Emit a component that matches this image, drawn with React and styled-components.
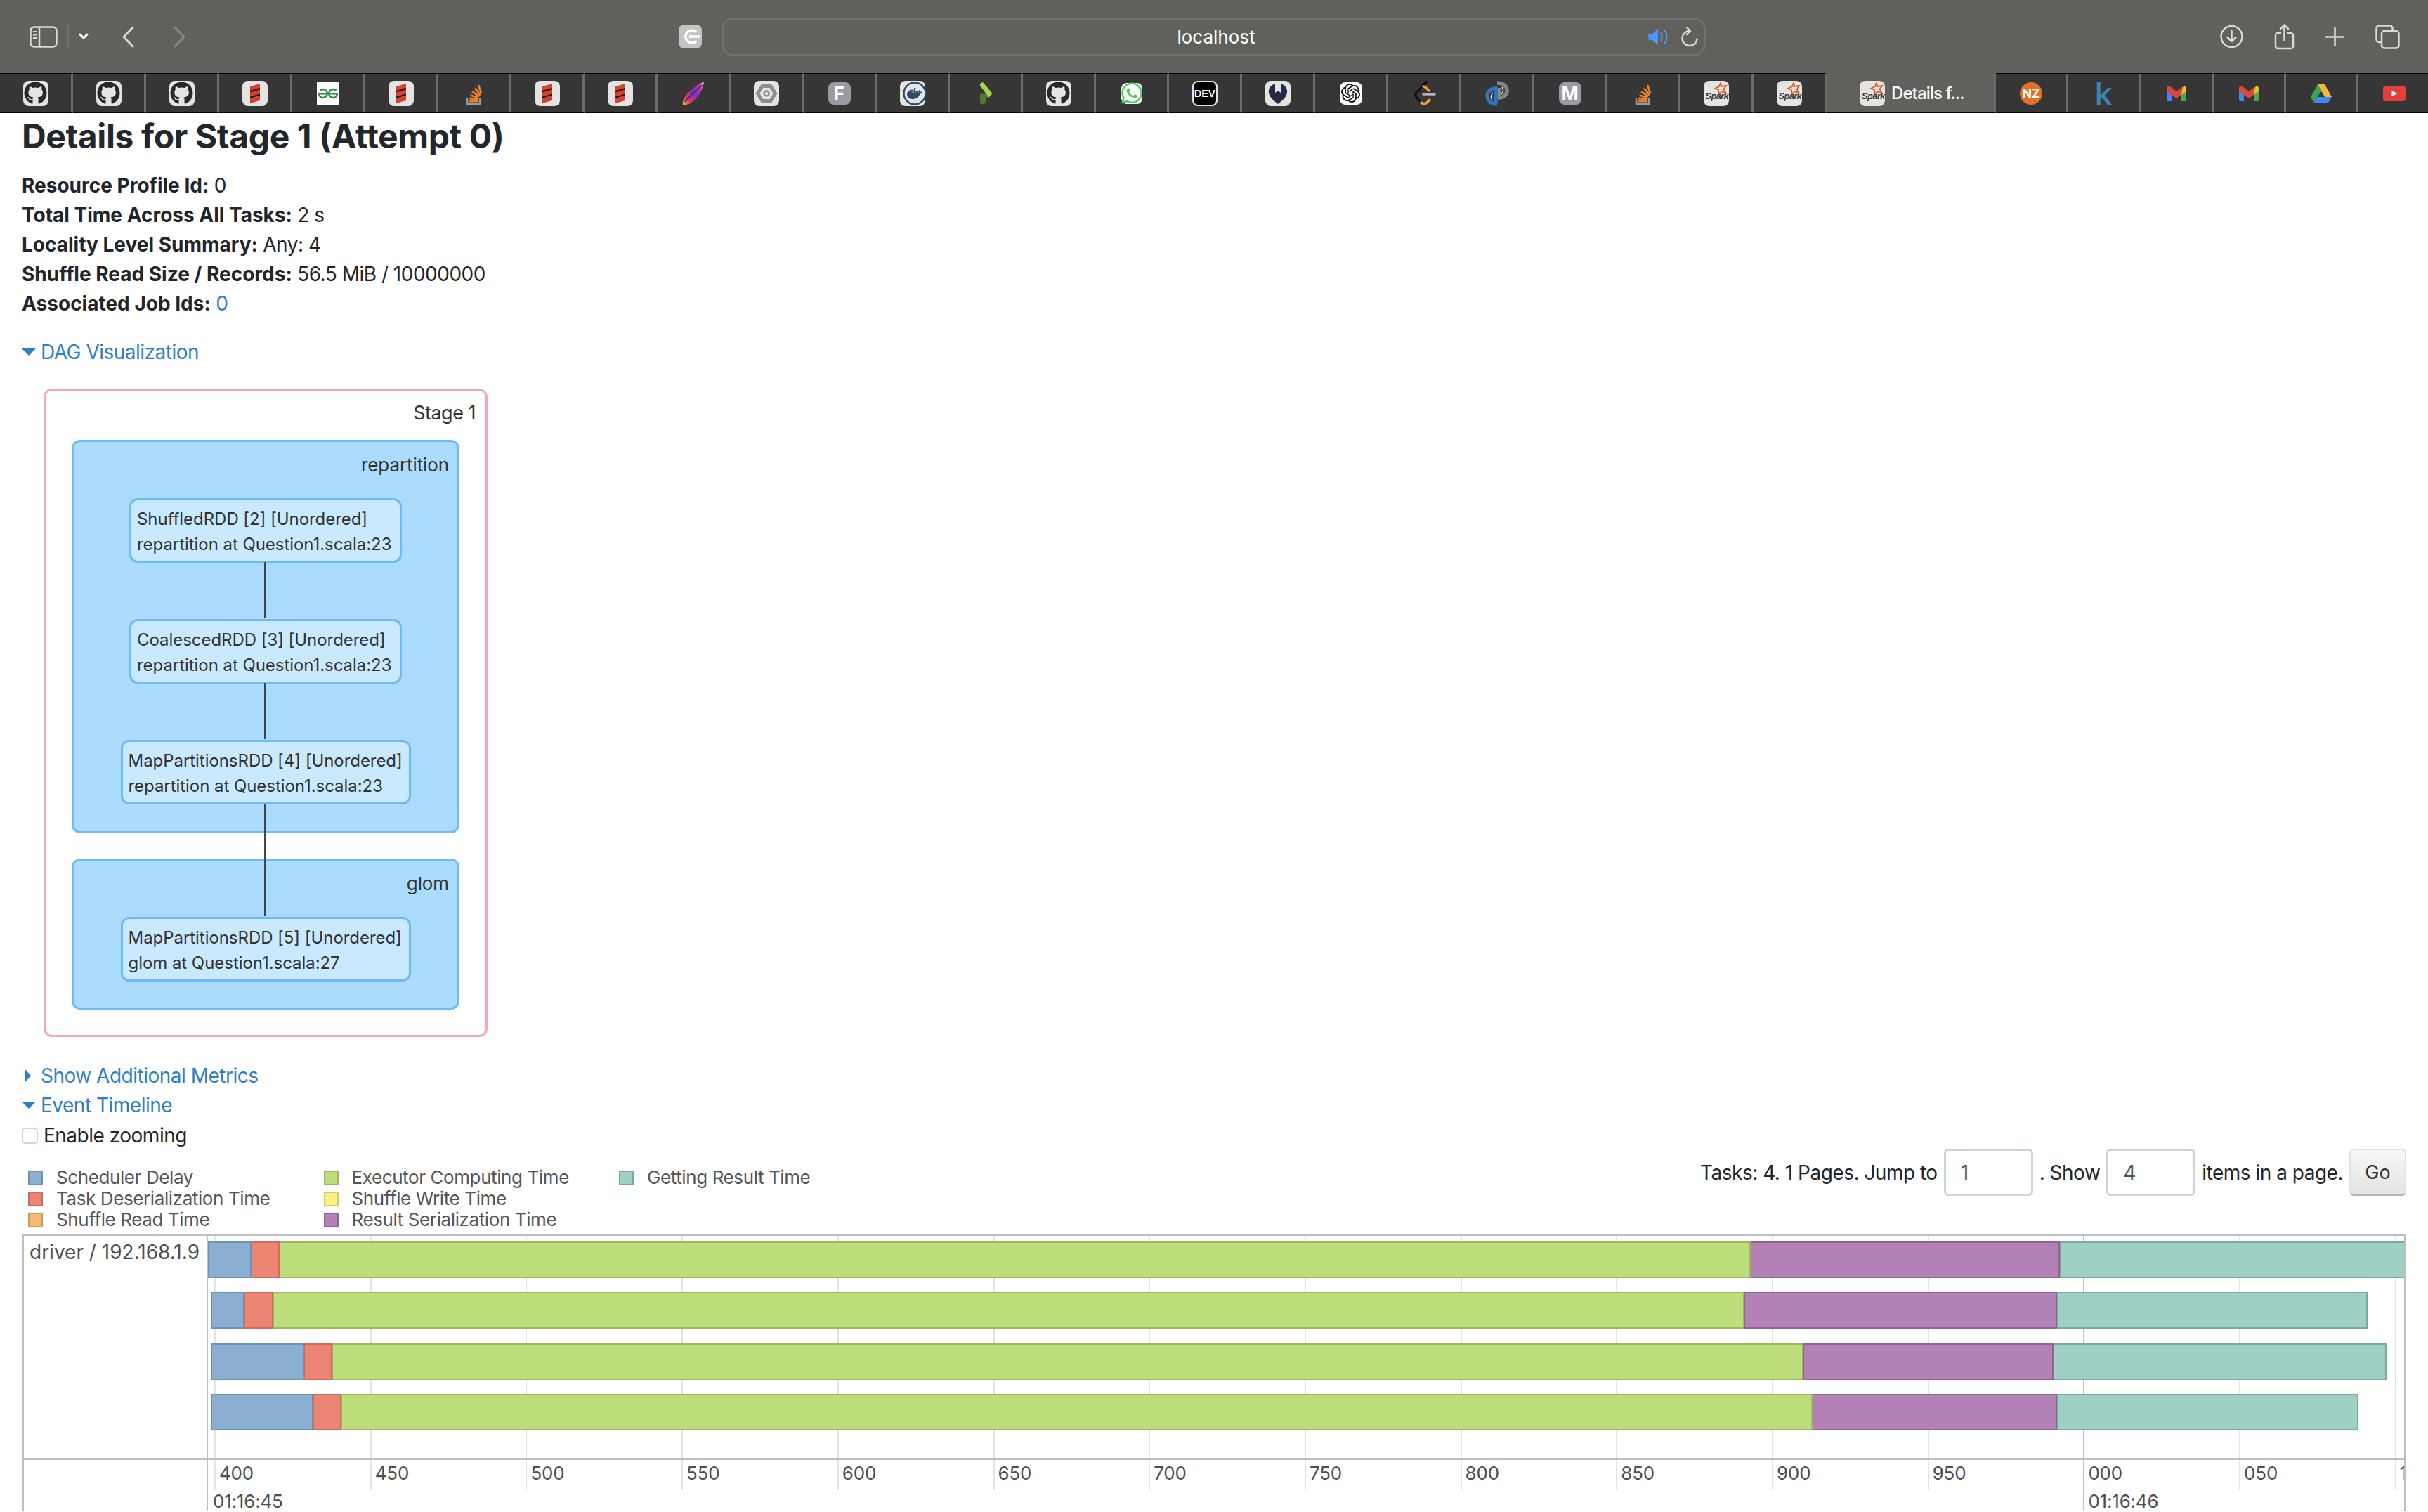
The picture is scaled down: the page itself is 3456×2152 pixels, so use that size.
import React from 'react';
import styled, { createGlobalStyle } from 'styled-components';
import { FaGithub } from 'react-icons/fa';
import { SiDocker, SiGeeksforgeeks, SiOpenai, SiWhatsapp } from 'react-icons/si';

const GlobalStyle = createGlobalStyle`
    html, body {
        margin: 0;
        height: 2152px;
        overflow: hidden;
        background: #ffffff;
    }
    * { box-sizing: border-box; }
`;

const FONT = `Inter, 'Noto Sans', 'Liberation Sans', sans-serif`;

/* browser chrome */
const Toolbar = styled.div`
    display: flex;
    align-items: center;
    height: 104px;
    background: #60605d;
`;

const NavGroup = styled.div`
    display: flex;
    align-items: center;
    width: 966px;
    padding-left: 42px;
`;

const NavDivider = styled.span`
    width: 2px;
    height: 36px;
    margin: 0 14px;
    background: #6f6f6c;
`;

const Spacer = styled.span`
    display: flex;
    margin-left: ${(p) => p.$left}px;
`;

const SiteChip = styled.div`
    display: flex;
    align-items: center;
    justify-content: center;
    width: 33px;
    height: 34px;
    border-radius: 8px;
    background: #c4c4c3;
`;

const UrlBar = styled.div`
    display: grid;
    grid-template-columns: 1fr auto 1fr;
    align-items: center;
    width: 1401px;
    height: 55px;
    margin-left: 28px;
    padding: 0 8px 0 12px;
    border: 3px solid #6f6f6c;
    border-radius: 17px;
`;

const UrlText = styled.span`
    grid-column: 2;
    margin-left: 3px;
    font: 400 26px ${FONT};
    color: #ffffff;
`;

const UrlIcons = styled.div`
    display: flex;
    align-items: center;
    justify-content: flex-end;
    gap: 17px;
`;

const ToolActions = styled.div`
    display: flex;
    align-items: center;
    gap: 44px;
    margin-left: auto;
    padding-right: 40px;
`;

const TabBar = styled.div`
    display: flex;
    height: 57px;
    background: #363636;
`;

const Tab = styled.div`
    display: flex;
    flex: none;
    align-items: center;
    justify-content: ${(p) => (p.$active ? 'flex-start' : 'center')};
    gap: 9px;
    width: ${(p) => p.$width}px;
    padding-left: ${(p) => (p.$active ? 47 : 0)}px;
    background: ${(p) => (p.$active ? '#60605d' : 'transparent')};
    border-top: 2px solid ${(p) => (p.$active ? '#60605d' : '#000000')};
    border-bottom: 2px solid #000000;
    border-right: 3px solid #6b6b6b;
`;

const TabTitle = styled.span`
    font: 500 24px ${FONT};
    letter-spacing: -0.9px;
    color: #ffffff;
`;

const Tile = styled.div`
    display: flex;
    flex: none;
    align-items: center;
    justify-content: center;
    width: ${(p) => p.$size || 36}px;
    height: ${(p) => p.$size || 36}px;
    border-radius: ${(p) => (p.$square ? 0 : 8)}px;
    background: ${(p) => p.$bg || '#e4e4e4'};
    color: ${(p) => p.$color || '#24292e'};
    font: 700 ${(p) => p.$fontSize || 24}px ${FONT};
`;

const DevTile = styled(Tile)`
    border: 2px solid #e4e4e4;
    background: #000000;
    color: #ffffff;
    font: 700 15px 'Liberation Sans Narrow', 'Liberation Sans', sans-serif;
    letter-spacing: -0.5px;
`;

const SparkMark = styled.span`
    position: absolute;
    left: 3px;
    bottom: 7px;
    font: italic 600 13px 'Liberation Sans', sans-serif;
    letter-spacing: -0.7px;
    color: #3b3b3b;
`;

const SparkTile = styled(Tile)`
    position: relative;
`;

const NzBadge = styled(Tile)`
    border-radius: 50%;
    background: #e0702b;
    color: #ffffff;
`;

const KayLetter = styled.span`
    font: 500 46px ${FONT};
    line-height: 46px;
    color: #3b84b7;
`;

const ICON = '#d9d9d7';

const SidebarIcon = () => (
    <svg width="40" height="31" viewBox="0 0 40 31" fill="none" stroke={ICON} strokeWidth="2.5">
        <rect x="1.5" y="1.5" width="37" height="28" rx="5" />
        <path d="M14 2v27" />
        <path d="M5 8h6M5 12.5h6M5 17h6" strokeWidth="2" />
    </svg>
);

const Chevron = () => (
    <svg width="14" height="10" viewBox="0 0 14 10" fill="none" stroke="#ffffff" strokeWidth="3" strokeLinecap="round" strokeLinejoin="round">
        <path d="M2 2l5 5 5-5" />
    </svg>
);

const ArrowIcon = ({ flip, color }) => (
    <svg width="18" height="31" viewBox="0 0 18 31" fill="none" stroke={color} strokeWidth="3" strokeLinecap="round" strokeLinejoin="round">
        <path d={flip ? 'M2 2l13 13.5L2 29' : 'M16 2L3 15.5 16 29'} />
    </svg>
);

const PowerIcon = () => (
    <svg width="26" height="26" viewBox="0 0 26 26" fill="none" stroke="#ffffff" strokeWidth="3.5">
        <path d="M21 6.500A9 9 0 1 0 21 19.500" />
        <path d="M12 13h14" />
        <circle cx="13" cy="13" r="2.500" fill="#ffffff" stroke="none" />
    </svg>
);

const SpeakerIcon = () => (
    <svg width="30" height="23" viewBox="0 0 28 22" fill="none">
        <path d="M0 7h5l8-7v22l-8-7H0z" fill="#4a9af5" />
        <path d="M17 6c2 3 2 7 0 10M22 2c4 5 4 13 0 18" stroke="#4a9af5" strokeWidth="1.800" strokeLinecap="round" />
    </svg>
);

const ReloadIcon = () => (
    <svg width="24" height="29" viewBox="0 0 24 29" fill="none" stroke={ICON} strokeWidth="2.400" strokeLinecap="round" strokeLinejoin="round">
        <path d="M12 6a10.500 10.500 0 1 0 10.500 11.500" />
        <path d="M8 1l5 5-5 5" />
    </svg>
);

const DownloadIcon = () => (
    <svg width="33" height="34" viewBox="0 0 33 34" fill="none" stroke={ICON} strokeWidth="2.5" strokeLinecap="round" strokeLinejoin="round">
        <circle cx="16.5" cy="17" r="15" />
        <path d="M16.5 9v15M10.500 18l6 6 6-6" />
    </svg>
);

const ShareIcon = () => (
    <svg width="29" height="37" viewBox="0 0 29 37" fill="none" stroke={ICON} strokeWidth="2.5" strokeLinecap="round" strokeLinejoin="round">
        <path d="M9 13H5a3 3 0 0 0-3 3v16a3 3 0 0 0 3 3h19a3 3 0 0 0 3-3V16a3 3 0 0 0-3-3h-4" />
        <path d="M14.5 23V2M9 7l5.500-5.500L20 7" />
    </svg>
);

const PlusIcon = () => (
    <svg width="27" height="27" viewBox="0 0 27 27" fill="none" stroke={ICON} strokeWidth="2.600" strokeLinecap="round">
        <path d="M13.5 1v25M1 13.500h25" />
    </svg>
);

const TabsIcon = () => (
    <svg width="35" height="35" viewBox="0 0 35 35" fill="none" stroke={ICON} strokeWidth="2.5">
        <rect x="9" y="9" width="24.5" height="24.5" rx="4" />
        <path d="M9 25H5a3.500 3.500 0 0 1-3.500-3.500V5A3.500 3.500 0 0 1 5 1.500h16A3.500 3.500 0 0 1 24.500 5v4" />
    </svg>
);

/* favicons */
const GithubFav = () => (
    <Tile><FaGithub size={33} /></Tile>
);

const ScalaFav = () => (
    <Tile>
        <svg width="36" height="36" viewBox="0 0 36 36">
            <path d="M11 12L25 8v5l-14 4zM11 20l14-4v5l-14 4z" fill="#1c1c1c" />
            <path d="M11 8l14-4v6l-14 4zM11 16.500l14-4v6l-14 4zM11 25l14-4v7l-14 4z" fill="#d8412b" />
        </svg>
    </Tile>
);

const GfgFav = () => (
    <Tile $square $bg="#ffffff" $size={32} $color="#2f8d46"><SiGeeksforgeeks size={28} /></Tile>
);

const StackFav = () => (
    <svg width="36" height="36" viewBox="0 0 36 36" fill="none">
        <path d="M8 25v8h18v-8" stroke="#9a9a9a" strokeWidth="2.500" />
        <path d="M11 29h12M11.500 25l12 1M12.500 20.500l11.500 3.500M15 15.500l10.500 6.500M19 10.500l8 9.500M24 6l4 11.500" stroke="#e8812e" strokeWidth="2.800" />
    </svg>
);

const FeatherFav = () => (
    <svg width="34" height="34" viewBox="0 0 34 34">
        <defs>
            <linearGradient id="featherFill" x1="0" y1="1" x2="1" y2="0">
                <stop offset="0" stopColor="#e8c02e" />
                <stop offset="0.25" stopColor="#e0355c" />
                <stop offset="0.55" stopColor="#7a2fc4" />
                <stop offset="0.8" stopColor="#d93b8f" />
                <stop offset="1" stopColor="#d8d8d8" />
            </linearGradient>
        </defs>
        <path d="M32 0C26 3 14 10 7 19 3 24 1 29 2 33 8 34 15 31 21 24 28 17 31 8 32 0z" fill="url(#featherFill)" />
        <path d="M5 29C11 21 20 14 29 5" stroke="#3c2a9c" strokeWidth="2" fill="none" />
    </svg>
);

const HexFav = () => (
    <Tile>
        <svg width="36" height="36" viewBox="0 0 36 36" fill="none">
            <path d="M12 7.500h12l6.500 10.500L24 28.500H12L5.500 18z" stroke="#8d8d8d" strokeWidth="5" />
            <circle cx="18" cy="18" r="3.500" stroke="#8d8d8d" strokeWidth="2.500" />
        </svg>
    </Tile>
);

const DockerFav = () => (
    <Tile $color="#2c4a69">
        <svg width="36" height="36" viewBox="0 0 36 36" fill="none">
            <circle cx="18" cy="18" r="15.500" stroke="#2c4a69" strokeWidth="2.400" />
        </svg>
        <Spacer $left={-29}><SiDocker size={22} /></Spacer>
    </Tile>
);

const ChevronFav = () => (
    <svg width="18" height="32" viewBox="0 0 18 32">
        <path d="M1 17l11-1-4 14c-2 2-6 2-7-1z" fill="#4f7a2c" />
        <path d="M1 5c-1-3 3-6 5-4l11 13c1 1 1 3 0 4l-5 5-1-5z" fill="#a3d34f" />
    </svg>
);

const WhatsappFav = () => (
    <Tile $bg="#ffffff" $color="#4fce5d" $size={30}><SiWhatsapp size={33} /></Tile>
);

const DevFav = () => <DevTile>DEV</DevTile>;

const BookmarkFav = () => (
    <Tile>
        <svg width="36" height="36" viewBox="0 0 36 36">
            <path d="M14 4v13l4-3 4 3V4c6 2 10 7 9 13-1 7-8 12-13 16C13 29 6 24 5 17 4 11 8 6 14 4z" fill="#232b45" />
        </svg>
    </Tile>
);

const OpenaiFav = () => (
    <Tile $bg="#ffffff" $size={32} $color="#111111"><SiOpenai size={27} /></Tile>
);

const LeetFav = () => (
    <svg width="36" height="36" viewBox="0 0 36 36" fill="none" strokeLinecap="round">
        <path d="M21 2L7 17c-2 3-1 6 1 8l5 5" stroke="#111111" strokeWidth="3.500" />
        <path d="M17 8c3 0 5 3 8 6M14 31c3 2 6 2 8 0l4-4" stroke="#efa42e" strokeWidth="3.500" />
        <path d="M17 19h16" stroke="#b5b5b5" strokeWidth="3.500" />
    </svg>
);

const LinkedArcFav = () => (
    <svg width="36" height="36" viewBox="0 0 36 36" fill="none">
        <path d="M18 3c8 0 14 4 14 11 0 6-5 10-11 10V10" stroke="#868686" strokeWidth="5.500" />
        <path d="M18 33C9 33 4 28 4 21c0-6 5-10 12-10v22" stroke="#2f74c0" strokeWidth="5.500" />
        <path d="M11 27c-2-3-2-7 1-10M25 9c2 3 2 7-1 10" stroke="#e8e8e8" strokeWidth="1.500" />
    </svg>
);

const LetterFav = ({ letter }) => (
    <Tile $bg="#9a9aa6" $color="#ffffff" $size={32} $fontSize={26}>{letter}</Tile>
);

const SparkFav = () => (
    <SparkTile>
        <SparkMark>Spark</SparkMark>
        <svg width="36" height="36" viewBox="0 0 36 36">
            <path d="M24 3l1.500 5 6.500-1-3.500 5 3 5-6-1.500-3.500 4-1-6.500-4.500-2.500 5.500-2.500z" fill="none" stroke="#e25a1c" strokeWidth="1.800" />
        </svg>
    </SparkTile>
);

const NzFav = () => <NzBadge $fontSize={18} $size={32}>NZ</NzBadge>;

const GmailFav = () => (
    <svg width="28" height="22" viewBox="0 0 28 22">
        <path d="M0 3h7v19H2a2 2 0 0 1-2-2z" fill="#4285f4" />
        <path d="M21 7h7v13a2 2 0 0 1-2 2h-5z" fill="#4fa85a" />
        <path d="M21 5l3-4c2-1 4 0 4 3v4l-7 5z" fill="#f4c02e" />
        <path d="M0 3c0-3 3-3 5-2l9 7 9-7-2 12-7 5-14-10z" fill="#d9483a" />
    </svg>
);

const DriveFav = () => (
    <svg width="30" height="26" viewBox="0 0 30 26">
        <path d="M10 0l5 9-10 17-5-8z" fill="#34a853" />
        <path d="M10 0h10l10 18H20z" fill="#f4b63f" />
        <path d="M5 26l5-8h20l-5 8z" fill="#4285f4" />
    </svg>
);

const YoutubeFav = () => (
    <svg width="32" height="22" viewBox="0 0 32 22">
        <rect width="32" height="22" rx="4" fill="#e53e3e" />
        <path d="M12.500 7l8 4-8 4z" fill="#ffffff" />
    </svg>
);

const leftTabs = [
    GithubFav, GithubFav, GithubFav, ScalaFav, GfgFav, ScalaFav, StackFav, ScalaFav, ScalaFav,
    FeatherFav, HexFav, () => <LetterFav letter="F" />, DockerFav, ChevronFav, GithubFav,
    WhatsappFav, DevFav, BookmarkFav, OpenaiFav, LeetFav, LinkedArcFav,
    () => <LetterFav letter="M" />, StackFav, SparkFav, SparkFav,
];

const rightTabs = [NzFav, () => <KayLetter>k</KayLetter>, GmailFav, GmailFav, DriveFav, YoutubeFav];

/* page */
const Page = styled.main`
    padding: 4px 31px 0;
    font: 400 28px/42px ${FONT};
    letter-spacing: -0.5px;
    color: #212529;
`;

const Title = styled.h4`
    margin: 0 0 20px;
    font: 700 48px/58px ${FONT};
    letter-spacing: -0.4px;
    color: #23272b;
`;

const Summary = styled.ul`
    margin: 0 0 1px;
    padding: 0;
    list-style: none;
`;

const SummaryRow = styled.li`
    height: 42px;

    strong {
        font-weight: 700;
        letter-spacing: 0;
    }
`;

const BlueLink = styled.a`
    color: #2f7fc6;
`;

const Toggle = styled.div`
    display: flex;
    align-items: center;
    height: 42px;
    margin-top: ${(p) => p.$top || 0}px;
    color: #2f7fc6;
`;

const ArrowSlot = styled.span`
    display: flex;
    justify-content: center;
    width: 27px;
`;

const ArrowDown = styled.span`
    margin-left: -8px;
    border-left: 10px solid transparent;
    border-right: 10px solid transparent;
    border-top: 10px solid #2f7fc6;
`;

const ArrowRight = styled.span`
    margin-left: -10px;
    border-top: 10px solid transparent;
    border-bottom: 10px solid transparent;
    border-left: 9px solid #2f7fc6;
`;

/* dag */
const StageBox = styled.section`
    width: 632px;
    height: 923px;
    margin: 31px 0 0 31px;
    padding: 12px 37px 0;
    border: 3px solid #f4a8b6;
    border-radius: 12px;
    color: #333333;
`;

const StageName = styled.div`
    height: 40px;
    margin: 0 -23px 18px 0;
    font-size: 27px;
    line-height: 40px;
    letter-spacing: -0.5px;
    text-align: right;
`;

const Cluster = styled.div`
    display: flex;
    flex-direction: column;
    align-items: center;
    gap: 80px;
    height: ${(p) => p.$height}px;
    margin-bottom: 36px;
    padding: 13px 14px 0;
    border: 3px solid #6fbcf5;
    border-radius: 12px;
    background: #abdcfd;
`;

const ClusterName = styled.div`
    align-self: stretch;
    height: 40px;
    margin: 0 -2px -53px 0;
    font-size: 26px;
    line-height: 40px;
    letter-spacing: -0.1px;
    text-align: right;
`;

const Node = styled.div`
    position: relative;
    flex: none;
    width: ${(p) => p.$width}px;
    height: 92px;
    padding: 9px 0 0 8px;
    border: 3px solid #6fbcf5;
    border-radius: 12px;
    background: #c9e9ff;
    font-size: 24px;
    line-height: 36px;
    letter-spacing: -0.05px;
    white-space: nowrap;

    &::after {
        content: ${(p) => (p.$edge ? "''" : 'none')};
        position: absolute;
        left: 50%;
        top: 100%;
        width: 3px;
        height: ${(p) => p.$edge}px;
        margin: 2px 0 0 -2px;
        background: #444444;
        z-index: 2;
    }
`;

/* timeline */
const TimelineHead = styled.div`
    display: flex;
    align-items: flex-start;
    justify-content: space-between;
    padding-top: 1px;
`;

const ZoomRow = styled.label`
    display: flex;
    align-items: center;
    height: 42px;
    gap: 8px;
`;

const ZoomBox = styled.span`
    width: 23px;
    height: 23px;
    border: 2px solid #d5d5d5;
    border-radius: 5px;
    background: #ffffff;
`;

const Legend = styled.div`
    display: grid;
    grid-template-columns: repeat(3, 420.5px);
    grid-auto-rows: 30px;
    margin-top: 24px;
    padding-left: 9px;
`;

const LegendItem = styled.div`
    display: flex;
    align-items: center;
    gap: 19px;
    font-size: 26px;
    letter-spacing: -0.4px;
    color: #555555;
`;

const Swatch = styled.span`
    width: 21px;
    height: 21px;
    border: 2px solid ${(p) => p.$edge};
    background: ${(p) => p.$fill};
`;

const Pager = styled.form`
    display: flex;
    align-items: center;
    gap: 9px;
    margin-top: 40px;
`;

const PagerInput = styled.input`
    width: 127px;
    height: 67px;
    padding: 0 21px;
    border: 3px solid #ced4da;
    border-radius: 6px;
    background: #ffffff;
    font: 400 28px ${FONT};
    color: #495057;
`;

const GoButton = styled.button`
    width: 81px;
    height: 67px;
    border: 2px solid #e2e2e2;
    border-bottom: 3px solid #b5b5b5;
    border-radius: 6px;
    background: linear-gradient(#f7f7f7, #e4e4e4);
    font: 400 27px ${FONT};
    color: #333333;
`;

const TimelineBox = styled.div`
    display: flex;
    height: 395px;
    margin-top: 5px;
    border: 3px solid #bfbfbf;
    border-bottom: 0;
    color: #4d4d4d;
`;

const LabelPanel = styled.div`
    flex: none;
    width: 262px;
    border-right: 2px solid #bfbfbf;
`;

const LabelCell = styled.div`
    height: 319px;
    padding: 3px 0 0 8px;
    border-bottom: 3px solid #bfbfbf;
    font-size: 28px;
    line-height: 40px;
    letter-spacing: 0;
    white-space: nowrap;
`;

const Canvas = styled.div`
    position: relative;
    flex: 1;
    overflow: hidden;
`;

const GridLine = styled.span`
    position: absolute;
    top: 0;
    left: ${(p) => p.$x}px;
    width: 2px;
    height: ${(p) => (p.$major ? '100%' : '362px')};
    background: ${(p) => (p.$major ? '#bfbfbf' : '#e4e4e4')};
`;

const Plot = styled.div`
    position: relative;
    display: flex;
    flex-direction: column;
    gap: 20.4px;
    height: 319px;
    padding-top: 8px;
    border-bottom: 3px solid #bfbfbf;
`;

const BarRow = styled.div`
    display: flex;
    flex: none;
    height: 52px;
`;

const Segment = styled.span`
    flex: none;
    border: 2px solid ${(p) => p.$edge};
    border-left-width: ${(p) => (p.$first ? 2 : 1)}px;
    background: ${(p) => p.$fill};
`;

const AxisRow = styled.div`
    position: relative;
    font-size: 26px;
    line-height: 40px;
    letter-spacing: -0.2px;
`;

const AxisLabel = styled.span`
    position: absolute;
    left: ${(p) => p.$x}px;
    top: ${(p) => p.$top}px;
`;

const SERIES = {
    delay: ['#8aafd0', '#6f93b5'],
    deser: ['#ed8575', '#cf6b5c'],
    read: ['#f4b974', '#d09b55'],
    exec: ['#bede7b', '#9cb95f'],
    write: ['#fdef82', '#d9c966'],
    result: ['#b381b6', '#8d6592'],
    get: ['#9ed0c6', '#7ba99f'],
};

const LEGEND = [
    ['delay', 'Scheduler Delay'],
    ['exec', 'Executor Computing Time'],
    ['get', 'Getting Result Time'],
    ['deser', 'Task Deserialization Time'],
    ['write', 'Shuffle Write Time'],
    null,
    ['read', 'Shuffle Read Time'],
    ['result', 'Result Serialization Time'],
];

// x positions of the segment edges, in page pixels
const ROWS = [
    [296, 358, 398, 2492, 2932, 3440],
    [300, 348, 389, 2483, 2928, 3370],
    [300, 433, 473, 2567, 2923, 3397],
    [300, 446, 486, 2580, 2928, 3357],
];
const ROW_KEYS = ['delay', 'deser', 'exec', 'result', 'get'];

const PLOT_LEFT = 296;
const TICK_LABELS = ['400', '450', '500', '550', '600', '650', '700', '750', '800', '850', '900', '950', '000', '050', '100'];
const tickX = (i) => 305 + i * 221.7 - PLOT_LEFT;

const App = () => (
    <>
        <GlobalStyle />
        <Toolbar>
            <NavGroup>
                <SidebarIcon />
                <NavDivider />
                <Chevron />
                <Spacer $left={47}><ArrowIcon color="#d9d9d7" /></Spacer>
                <Spacer $left={56}><ArrowIcon flip color="#858583" /></Spacer>
            </NavGroup>
            <SiteChip><PowerIcon /></SiteChip>
            <UrlBar>
                <UrlText>localhost</UrlText>
                <UrlIcons>
                    <SpeakerIcon />
                    <ReloadIcon />
                </UrlIcons>
            </UrlBar>
            <ToolActions>
                <DownloadIcon />
                <ShareIcon />
                <PlusIcon />
                <TabsIcon />
            </ToolActions>
        </Toolbar>
        <TabBar>
            {leftTabs.map((Fav, i) => (
                <Tab key={i} $width={104}><Fav /></Tab>
            ))}
            <Tab $active $width={241}>
                <SparkFav />
                <TabTitle>Details f...</TabTitle>
            </Tab>
            {rightTabs.map((Fav, i) => (
                <Tab key={i} $width={103.3}><Fav /></Tab>
            ))}
        </TabBar>
        <Page>
            <Title>Details for Stage 1 (Attempt 0)</Title>
            <Summary>
                <SummaryRow><strong>Resource Profile Id:</strong> 0</SummaryRow>
                <SummaryRow><strong>Total Time Across All Tasks:</strong> 2 s</SummaryRow>
                <SummaryRow><strong>Locality Level Summary:</strong> Any: 4</SummaryRow>
                <SummaryRow><strong>Shuffle Read Size / Records:</strong> 56.5 MiB / 10000000</SummaryRow>
                <SummaryRow><strong>Associated Job Ids:</strong> <BlueLink>0</BlueLink></SummaryRow>
            </Summary>
            <Toggle $top={27}><ArrowSlot><ArrowDown /></ArrowSlot>DAG Visualization</Toggle>
            <StageBox>
                <StageName>Stage 1</StageName>
                <Cluster $height={560}>
                    <ClusterName>repartition</ClusterName>
                    <Node $width={388} $edge={80}>
                        ShuffledRDD [2] [Unordered]<br />repartition at Question1.scala:23
                    </Node>
                    <Node $width={388} $edge={80}>
                        CoalescedRDD [3] [Unordered]<br />repartition at Question1.scala:23
                    </Node>
                    <Node $width={413} $edge={160}>
                        MapPartitionsRDD [4] [Unordered]<br />repartition at Question1.scala:23
                    </Node>
                </Cluster>
                <Cluster $height={215}>
                    <ClusterName>glom</ClusterName>
                    <Node $width={413}>
                        MapPartitionsRDD [5] [Unordered]<br />glom at Question1.scala:27
                    </Node>
                </Cluster>
            </StageBox>
            <Toggle $top={34}><ArrowSlot><ArrowRight /></ArrowSlot>Show Additional Metrics</Toggle>
            <Toggle><ArrowSlot><ArrowDown /></ArrowSlot>Event Timeline</Toggle>
            <TimelineHead>
                <div>
                    <ZoomRow><ZoomBox />Enable zooming</ZoomRow>
                    <Legend>
                        {LEGEND.map((item, i) => (item ? (
                            <LegendItem key={i}>
                                <Swatch $fill={SERIES[item[0]][0]} $edge={SERIES[item[0]][1]} />
                                {item[1]}
                            </LegendItem>
                        ) : <span key={i} />))}
                    </Legend>
                </div>
                <Pager>
                    Tasks: 4. 1 Pages. Jump to
                    <PagerInput defaultValue="1" />
                    . Show
                    <PagerInput defaultValue="4" />
                    items in a page.
                    <GoButton type="button">Go</GoButton>
                </Pager>
            </TimelineHead>
            <TimelineBox>
                <LabelPanel>
                    <LabelCell>driver / 192.168.1.9</LabelCell>
                </LabelPanel>
                <Canvas>
                    {TICK_LABELS.map((t, i) => (
                        <GridLine key={t} $x={tickX(i)} $major={t === '000'} />
                    ))}
                    <Plot>
                        {ROWS.map((edges, r) => (
                            <BarRow key={r} style={{ marginLeft: edges[0] - PLOT_LEFT }}>
                                {ROW_KEYS.map((k, s) => (
                                    <Segment
                                        key={k}
                                        $first={s === 0}
                                        $fill={SERIES[k][0]}
                                        $edge={SERIES[k][1]}
                                        style={{ width: edges[s + 1] - edges[s] }}
                                    />
                                ))}
                            </BarRow>
                        ))}
                    </Plot>
                    <AxisRow>
                        {TICK_LABELS.map((t, i) => (
                            <AxisLabel key={t} $x={tickX(i) + 7} $top={-1}>{t}</AxisLabel>
                        ))}
                        <AxisLabel $x={7} $top={39}>01:16:45</AxisLabel>
                        <AxisLabel $x={tickX(12) + 7} $top={39}>01:16:46</AxisLabel>
                    </AxisRow>
                </Canvas>
            </TimelineBox>
        </Page>
    </>
);

export default App;
